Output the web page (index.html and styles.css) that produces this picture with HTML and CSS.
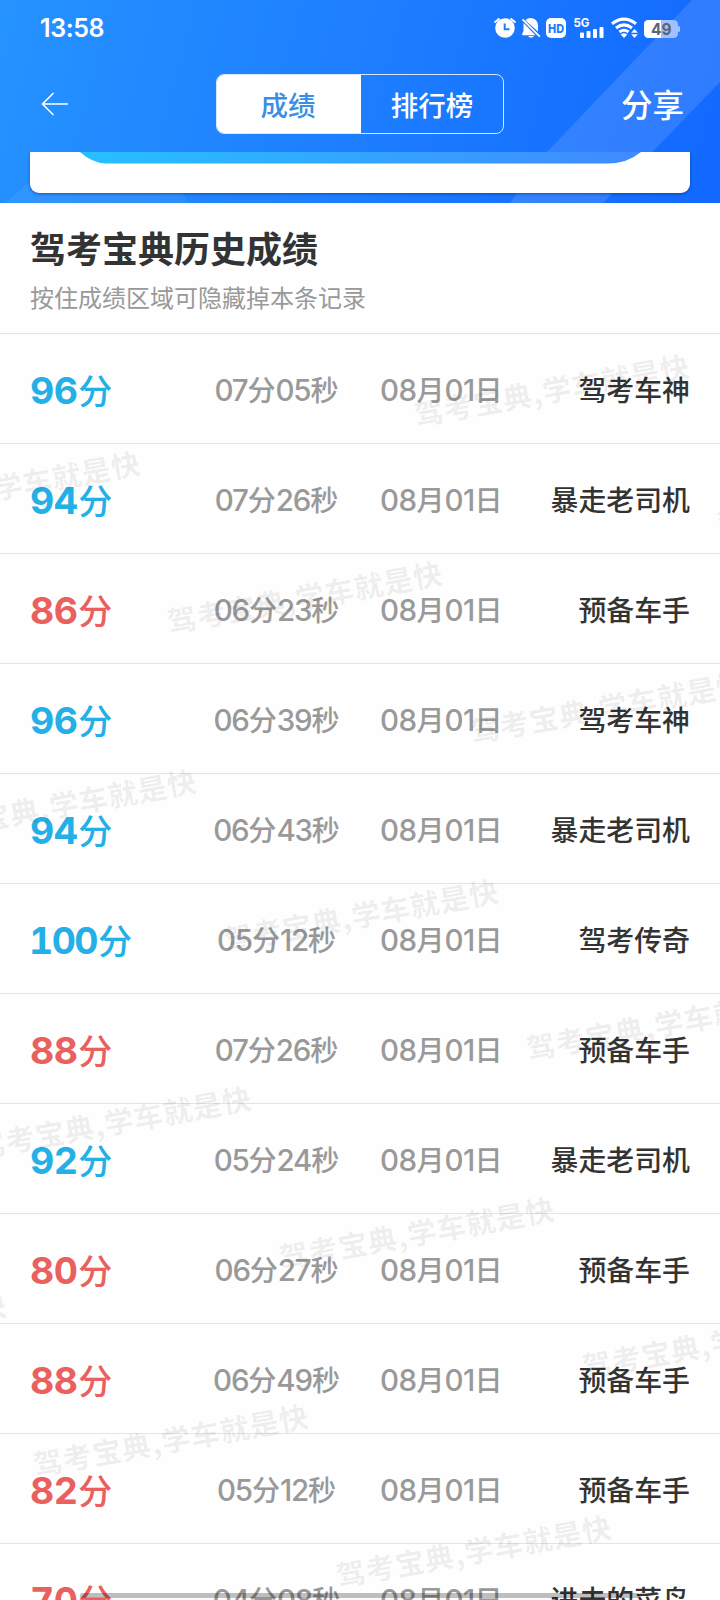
FILE: index.html
```html
<!DOCTYPE html>
<html lang="zh-CN">
<head>
<meta charset="utf-8">
<title>驾考宝典历史成绩</title>
<link rel="stylesheet" href="styles.css">
</head>
<body>
<div class="screen">
  <header class="header">
    <svg class="header-art" width="720" height="203" viewBox="0 0 720 203">
      <path d="M692 0H720V82L603 203H510L547 152Z" fill="#fff" fill-opacity=".12"/>
      <path d="M5 203L32 180H172L189 203Z" fill="#fff" fill-opacity=".06"/>
    </svg>
    <div class="status">
      <span class="clock">13:58</span>
      <svg class="status-icons" width="190" height="24" viewBox="490 16 190 24">
        <g fill="#fff">
          <circle cx="505" cy="28" r="9.8"/>
          <path d="M494.5 22.5L499.5 18.5M515.5 22.5L510.5 18.5" stroke="#fff" stroke-width="2"/>
          <path d="M504.7 23.5V29.2H509.5" fill="none" stroke="#1e7dff" stroke-width="2"/>
          <path d="M525.500 20.500Q526.500 18 531 18Q537.700 18.500 538 26V31.500ZM523.500 23L535.500 35.300H523Q521.300 35 522.500 33L523.500 31Z"/>
          <path d="M528 36H534Q531 39.500 528 36Z"/>
          <path d="M522.5 19.3L539.8 36.6" stroke="#fff" stroke-width="1.700"/>
          <rect x="546" y="18" width="20" height="20" rx="5"/>
          <text class="hd" x="548" y="32.6" textLength="16" lengthAdjust="spacingAndGlyphs">HD</text>
          <text class="five" x="573.5" y="27.3" textLength="16" lengthAdjust="spacingAndGlyphs">5G</text>
          <rect x="580" y="32.500" width="4" height="5.500" rx="1"/><rect x="586.5" y="31" width="4" height="7" rx="1"/><rect x="593" y="29" width="4" height="9" rx="1"/><rect x="599.5" y="27" width="4" height="11" rx="1"/>
        </g>
        <g fill="none" stroke="#fff" stroke-width="3">
          <path d="M612 23.7Q624 14.5 636 23.7"/><path d="M616 28Q624 21.8 632 28"/><path d="M619.5 32Q624 28.5 628.5 32"/>
        </g>
        <path d="M624 38L620.7 34.5Q624 32 627.3 34.5ZM631.2 32.700L634.5 29L637.8 32.700ZM631.2 34.3L634.5 38L637.8 34.3Z" fill="#fff"/>
        <rect x="644" y="20" width="34" height="18" rx="4.5" fill="#9fc1ff"/>
        <path d="M648.500 20H661V38H648.500A4.500 4.500 0 0 1 644 33.500V24.500A4.500 4.500 0 0 1 648.500 20Z" fill="#fff"/>
        <rect x="678" y="26" width="2" height="6" rx="1" fill="#9fc1ff"/>
        <text class="pct" x="651" y="35.3" textLength="20.500" lengthAdjust="spacingAndGlyphs">49</text>
      </svg>
    </div>
    <nav class="nav">
      <svg class="back" width="28" height="24" viewBox="0 0 28 24"><path d="M27 12H1.500M12.500 1L1.500 12L12.500 23" fill="none" stroke="#fff" stroke-width="1.600"/></svg>
      <div class="tabs"><span class="tab active">成绩</span><span class="tab">排行榜</span></div>
      <span class="share">分享</span>
    </nav>
    <div class="card-clip"><div class="card">
      <svg width="660" height="12" viewBox="0 0 660 12"><defs><linearGradient id="g"><stop offset="0" stop-color="#26c0ff"/><stop offset="1" stop-color="#408aff"/></linearGradient></defs><path d="M50 0H611Q597 11.500 578 11.500H76Q62 11 50 0Z" fill="url(#g)"/></svg>
    </div></div>
  </header>
  <section class="intro">
    <h1 class="title">驾考宝典历史成绩</h1>
    <p class="hint">按住成绩区域可隐藏掉本条记录</p>
  </section>
  <main class="list">
    <div class="row"><span class="score"><b>96</b>分</span><span class="time"><i>07</i>分<i>05</i>秒</span><span class="date"><i>08</i>月<i>01</i>日</span><span class="rank">驾考车神</span></div>
    <div class="row"><span class="score"><b>94</b>分</span><span class="time"><i>07</i>分<i>26</i>秒</span><span class="date"><i>08</i>月<i>01</i>日</span><span class="rank">暴走老司机</span></div>
    <div class="row"><span class="score fail"><b>86</b>分</span><span class="time"><i>06</i>分<i>23</i>秒</span><span class="date"><i>08</i>月<i>01</i>日</span><span class="rank">预备车手</span></div>
    <div class="row"><span class="score"><b>96</b>分</span><span class="time"><i>06</i>分<i>39</i>秒</span><span class="date"><i>08</i>月<i>01</i>日</span><span class="rank">驾考车神</span></div>
    <div class="row"><span class="score"><b>94</b>分</span><span class="time"><i>06</i>分<i>43</i>秒</span><span class="date"><i>08</i>月<i>01</i>日</span><span class="rank">暴走老司机</span></div>
    <div class="row"><span class="score full"><b>100</b>分</span><span class="time"><i>05</i>分<i>12</i>秒</span><span class="date"><i>08</i>月<i>01</i>日</span><span class="rank">驾考传奇</span></div>
    <div class="row"><span class="score fail"><b>88</b>分</span><span class="time"><i>07</i>分<i>26</i>秒</span><span class="date"><i>08</i>月<i>01</i>日</span><span class="rank">预备车手</span></div>
    <div class="row"><span class="score"><b>92</b>分</span><span class="time"><i>05</i>分<i>24</i>秒</span><span class="date"><i>08</i>月<i>01</i>日</span><span class="rank">暴走老司机</span></div>
    <div class="row"><span class="score fail"><b>80</b>分</span><span class="time"><i>06</i>分<i>27</i>秒</span><span class="date"><i>08</i>月<i>01</i>日</span><span class="rank">预备车手</span></div>
    <div class="row"><span class="score fail"><b>88</b>分</span><span class="time"><i>06</i>分<i>49</i>秒</span><span class="date"><i>08</i>月<i>01</i>日</span><span class="rank">预备车手</span></div>
    <div class="row"><span class="score fail"><b>82</b>分</span><span class="time"><i>05</i>分<i>12</i>秒</span><span class="date"><i>08</i>月<i>01</i>日</span><span class="rank">预备车手</span></div>
    <div class="row"><span class="score fail"><b>70</b>分</span><span class="time"><i>04</i>分<i>08</i>秒</span><span class="date"><i>08</i>月<i>01</i>日</span><span class="rank">进击的菜鸟</span></div>
  </main>
  <svg class="watermark" width="720" height="1600" viewBox="0 0 720 1600">
    <text transform="translate(552 390) rotate(-10.200)" dy="11.500">驾考宝典,学车就是快</text>
    <text transform="translate(855 499) rotate(-10.200)" dy="11.500">驾考宝典,学车就是快</text>
    <text transform="translate(3 487) rotate(-10.200)" dy="11.500">驾考宝典,学车就是快</text>
    <text transform="translate(305 597) rotate(-10.200)" dy="11.500">驾考宝典,学车就是快</text>
    <text transform="translate(608 707) rotate(-10.200)" dy="11.500">驾考宝典,学车就是快</text>
    <text transform="translate(59 805) rotate(-10.200)" dy="11.500">驾考宝典,学车就是快</text>
    <text transform="translate(361 915) rotate(-10.200)" dy="11.500">驾考宝典,学车就是快</text>
    <text transform="translate(664 1024) rotate(-10.200)" dy="11.500">驾考宝典,学车就是快</text>
    <text transform="translate(114 1122) rotate(-10.200)" dy="11.500">驾考宝典,学车就是快</text>
    <text transform="translate(417 1233) rotate(-10.200)" dy="11.500">驾考宝典,学车就是快</text>
    <text transform="translate(-131 1329) rotate(-10.200)" dy="11.500">驾考宝典,学车就是快</text>
    <text transform="translate(720 1342) rotate(-10.200)" dy="11.500">驾考宝典,学车就是快</text>
    <text transform="translate(171 1440) rotate(-10.200)" dy="11.500">驾考宝典,学车就是快</text>
    <text transform="translate(474 1551) rotate(-10.200)" dy="11.500">驾考宝典,学车就是快</text>
  </svg>
  <div class="home-bar"></div>
</div>
</body>
</html>
```
FILE: styles.css
```css
* { box-sizing: border-box; }
body { margin: 0; background: #fff; font-family: "Noto Sans CJK SC", sans-serif; }
.screen { position: relative; width: 720px; height: 1600px; overflow: hidden; background: #fefefe; }
.header { position: relative; height: 203px; background: linear-gradient(105deg, #2593ff 0%, #1e80ff 45%, #1268ff 100%); }
.header-art { position: absolute; left: 0; top: 0; }
.status { position: relative; height: 56px; padding: 0 40px; display: flex; align-items: center; justify-content: space-between; }
.clock { color: #fff; font: 600 25px/58px Inter, sans-serif; letter-spacing: -.4px; }
.status-icons { display: block; }
.hd { font: 800 12px Inter, sans-serif; fill: #1e7dff; }
.five { font: 700 12px Inter, sans-serif; fill: #fff; }
.pct { font: 700 16px Inter, sans-serif; fill: #5b6472; }
.nav { position: relative; height: 96px; padding: 0 36px 0 41px; display: grid; grid-template-columns: 175px 288px 1fr; align-items: center; color: #fff; }
.back { display: block; }
.tabs { display: flex; width: 288px; height: 60px; border: 1px solid #d5e7ff; border-radius: 8px; overflow: hidden; }
.tab { width: 142px; font-size: 27.500px; font-weight: 500; line-height: 58px; text-align: center; }
.tab.active { background: #fff; color: #3a8ee6; width: 144px; padding-right: 2px; }
.share { font-size: 31.500px; font-weight: 500; line-height: 60px; text-align: right; margin-top: -2px; }
.card-clip { position: relative; height: 51px; padding: 0 30px; overflow: hidden; }
.card { height: 41px; background: #fff; border-radius: 0 0 9px 9px; box-shadow: 0 1px 3px rgba(0,30,90,.5); overflow: hidden; }
.card svg { display: block; }
.intro { height: 130px; padding: 20px 30px 0; }
.title { margin: 0; font-size: 36px; line-height: 48px; font-weight: 600; color: #333; }
.hint { margin: 10px 0 0; font-size: 24px; line-height: 32px; color: #999; }
.row { position: relative; display: grid; grid-template-columns: 182px 168px 130px 1fr; align-items: center; height: 110px; padding: 1px 30px 0; border-top: 1px solid #e4e4e4; white-space: nowrap; }
.score { color: #22b0e6; font-size: 34px; font-weight: 500; line-height: 50px; padding-top: 2px; }
.score.fail { color: #e9605f; }
.score b { font: 700 37.500px Inter, sans-serif; font-variant-numeric: tabular-nums; letter-spacing: -.600px; margin-right: 1px; }
.score.full b { letter-spacing: -1.600px; margin-left: -1px; }
.time, .date { font-size: 28px; font-weight: 500; line-height: 42px; color: #999; }
.time { text-align: center; width: 129px; }
.time i, .date i { font: 500 29.500px Inter, sans-serif; letter-spacing: -1.200px; }
.date i { letter-spacing: -.600px; }
.rank { color: #333; font-size: 27.900px; font-weight: 500; line-height: 42px; text-align: right; }
.watermark { position: absolute; left: 0; top: 0; pointer-events: none; }
.watermark text { font-size: 29px; font-weight: 700; letter-spacing: .900px; text-anchor: middle; fill: #000; fill-opacity: .07; }
.home-bar { position: absolute; left: 80px; top: 1593px; width: 560px; height: 5px; border-radius: 3px; background: rgba(0,0,0,.25); }
```
